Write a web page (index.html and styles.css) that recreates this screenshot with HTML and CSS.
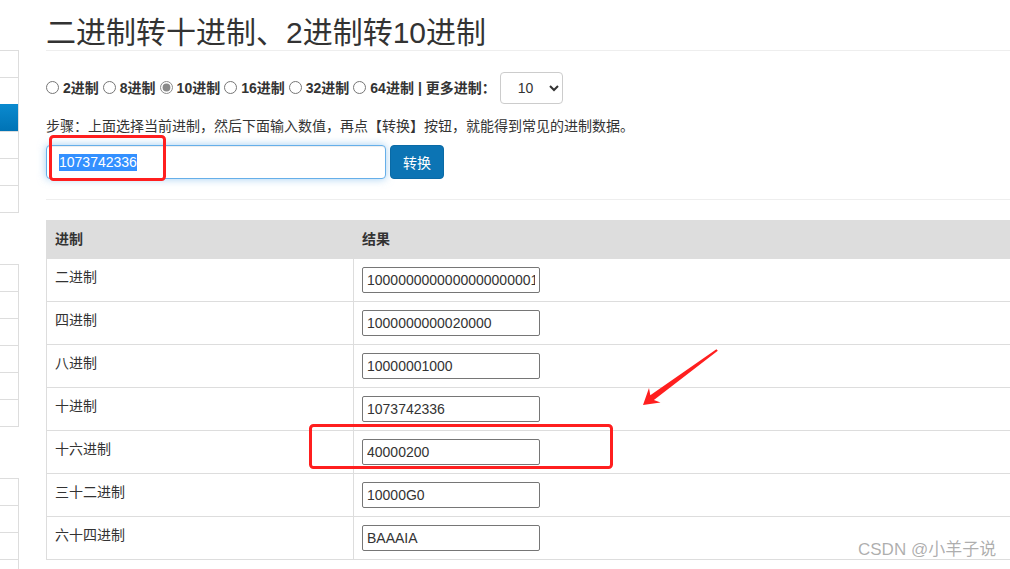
FILE: index.html
```html
<!DOCTYPE html>
<html lang="zh-CN">
<head>
<meta charset="utf-8">
<title>二进制转十进制</title>
<link rel="stylesheet" href="styles.css">
</head>
<body>
<div class="page">
  <aside class="sidebar">
    <ul class="nav-group">
      <li class="nav-item"></li>
      <li class="nav-item"></li>
      <li class="nav-item active"></li>
      <li class="nav-item"></li>
      <li class="nav-item"></li>
      <li class="nav-item"></li>
    </ul>
    <ul class="nav-group">
      <li class="nav-item"></li>
      <li class="nav-item"></li>
      <li class="nav-item"></li>
      <li class="nav-item"></li>
      <li class="nav-item"></li>
      <li class="nav-item"></li>
    </ul>
    <ul class="nav-group">
      <li class="nav-item"></li>
      <li class="nav-item"></li>
      <li class="nav-item"></li>
      <li class="nav-item"></li>
    </ul>
  </aside>
  <main class="main">
    <h1 class="title">二进制转十进制、2进制转10进制</h1>
    <form class="base-row">
      <label class="opt"><input type="radio" name="base">2进制</label>
      <label class="opt"><input type="radio" name="base">8进制</label>
      <label class="opt"><input type="radio" name="base" checked>10进制</label>
      <label class="opt"><input type="radio" name="base">16进制</label>
      <label class="opt"><input type="radio" name="base">32进制</label>
      <label class="opt"><input type="radio" name="base">64进制</label>
      <span class="sep">|</span>
      <span class="more">更多进制：</span>
      <select class="more-select"><option>10</option></select>
    </form>
    <p class="steps">步骤：上面选择当前进制，然后下面输入数值，再点【转换】按钮，就能得到常见的进制数据。</p>
    <div class="convert">
      <div class="value-box"><span class="sel">1073742336</span></div>
      <button class="btn" type="button">转换</button>
    </div>
    <hr class="rule">
    <table class="result">
      <colgroup><col class="c1"><col class="c2"></colgroup>
      <thead>
        <tr><th>进制</th><th>结果</th></tr>
      </thead>
      <tbody>
        <tr><td>二进制</td><td><input class="out" type="text" value="1000000000000000000001000000000"></td></tr>
        <tr><td>四进制</td><td><input class="out" type="text" value="1000000000020000"></td></tr>
        <tr><td>八进制</td><td><input class="out" type="text" value="10000001000"></td></tr>
        <tr><td>十进制</td><td><input class="out" type="text" value="1073742336"></td></tr>
        <tr><td>十六进制</td><td><input class="out" type="text" value="40000200"></td></tr>
        <tr><td>三十二进制</td><td><input class="out" type="text" value="10000G0"></td></tr>
        <tr><td>六十四进制</td><td><input class="out" type="text" value="BAAAIA"></td></tr>
      </tbody>
    </table>
  </main>
</div>
<svg class="annot" width="1010" height="569" viewBox="0 0 1010 569">
  <rect x="50.5" y="136.5" width="114" height="43" rx="3" fill="none" stroke="#ff1f1f" stroke-width="3"/>
  <rect x="310.5" y="425.5" width="301" height="42" rx="3" fill="none" stroke="#ff1f1f" stroke-width="3"/>
  <polygon points="643,405 649,388 650.3,395.3 716.4,349.2 717.8,350.8 653.9,400.1 660.5,402.5" fill="#ff1f1f"/>
</svg>
<div class="watermark">CSDN @小羊子说</div>
</body>
</html>
```

FILE: styles.css
```css
* { box-sizing: border-box; }
html, body { margin: 0; padding: 0; }
body {
  width: 1010px;
  height: 569px;
  overflow: hidden;
  position: relative;
  background: #fff;
  color: #333;
  font-family: "Liberation Sans", "Noto Sans CJK SC", sans-serif;
  font-size: 14px;
  line-height: 20px;
}
.page { display: flex; align-items: flex-start; }

/* sidebar (cropped list groups) */
.sidebar {
  flex: 0 0 19px;
  display: flex;
  flex-direction: column;
  gap: 51px;
  padding-top: 50px;
}
.nav-group {
  list-style: none;
  margin: 0;
  padding: 0;
  border: 1px solid #ddd;
  border-left: 0;
}
.nav-item { height: 27px; border-top: 1px solid #ddd; background: #fff; }
.nav-item:first-child { height: 26px; border-top: 0; }
.nav-item.active {
  background: linear-gradient(#0a89ce, #0073b5);
  border-top-color: #0a89ce;
}

/* main column */
.main { flex: 0 0 1000px; margin-left: 27px; }
.title {
  margin: 0;
  padding-top: 15px;
  font-size: 30px;
  line-height: 35px;
  font-weight: normal;
  color: #333;
  border-bottom: 1px solid #eee;
}
.base-row {
  display: flex;
  align-items: center;
  gap: 4px;
  margin: 20px 0 0;
  height: 33px;
  font-weight: bold;
}
.opt { display: inline-flex; align-items: center; gap: 4px; }
.opt input { margin: 0; width: 13px; height: 13px; accent-color: #8a8a8a; }
.more-select {
  width: 63px;
  height: 32px;
  margin: 0;
  padding: 0 0 0 13px;
  border: 1px solid #ccc;
  border-radius: 4px;
  background: #fff;
  color: #333;
  font-family: "Liberation Sans", sans-serif;
  font-size: 14px;
}
.steps { margin: 12px 0 0; line-height: 20px; }
.convert { display: flex; gap: 4px; margin-top: 9px; }
.value-box {
  width: 340px;
  height: 34px;
  padding: 0 12px;
  display: flex;
  align-items: center;
  border: 1px solid #66afe9;
  border-radius: 4px;
  box-shadow: inset 0 1px 1px rgba(0,0,0,.075), 0 0 8px rgba(102,175,233,.6);
  background: #fff;
}
.sel { background: #3390ff; color: #fff; line-height: 17px; }
.btn {
  width: 54px;
  height: 34px;
  padding: 0;
  border: 1px solid #0a6aa6;
  border-radius: 4px;
  background: #0c74b4;
  color: #fff;
  font-family: "Liberation Sans", "Noto Sans CJK SC", sans-serif;
  font-size: 14px;
}
.rule { margin: 20px 0 0; border: 0; border-top: 1px solid #eee; height: 0; }

/* table */
.result {
  margin-top: 20px;
  width: 1000px;
  border-collapse: collapse;
  table-layout: fixed;
}
.result col.c1 { width: 307px; }
.result th, .result td {
  border: 1px solid #ddd;
  text-align: left;
  vertical-align: top;
  padding: 8px;
  line-height: 20px;
}
.result th { background: #ddd; padding: 8px 8px 9px; font-weight: bold; }
.out {
  display: block;
  width: 178px;
  height: 26px;
  margin: 0;
  padding: 1px 4px;
  border: 1px solid #767676;
  border-radius: 2px;
  color: #333;
  font-family: "Liberation Sans", sans-serif;
  font-size: 14px;
}

/* overlays */
.annot { position: absolute; left: 0; top: 0; pointer-events: none; }
.watermark {
  position: absolute;
  left: 858px;
  top: 540px;
  font-size: 17px;
  line-height: 20px;
  color: rgba(120,120,120,.6);
  white-space: nowrap;
}
```
